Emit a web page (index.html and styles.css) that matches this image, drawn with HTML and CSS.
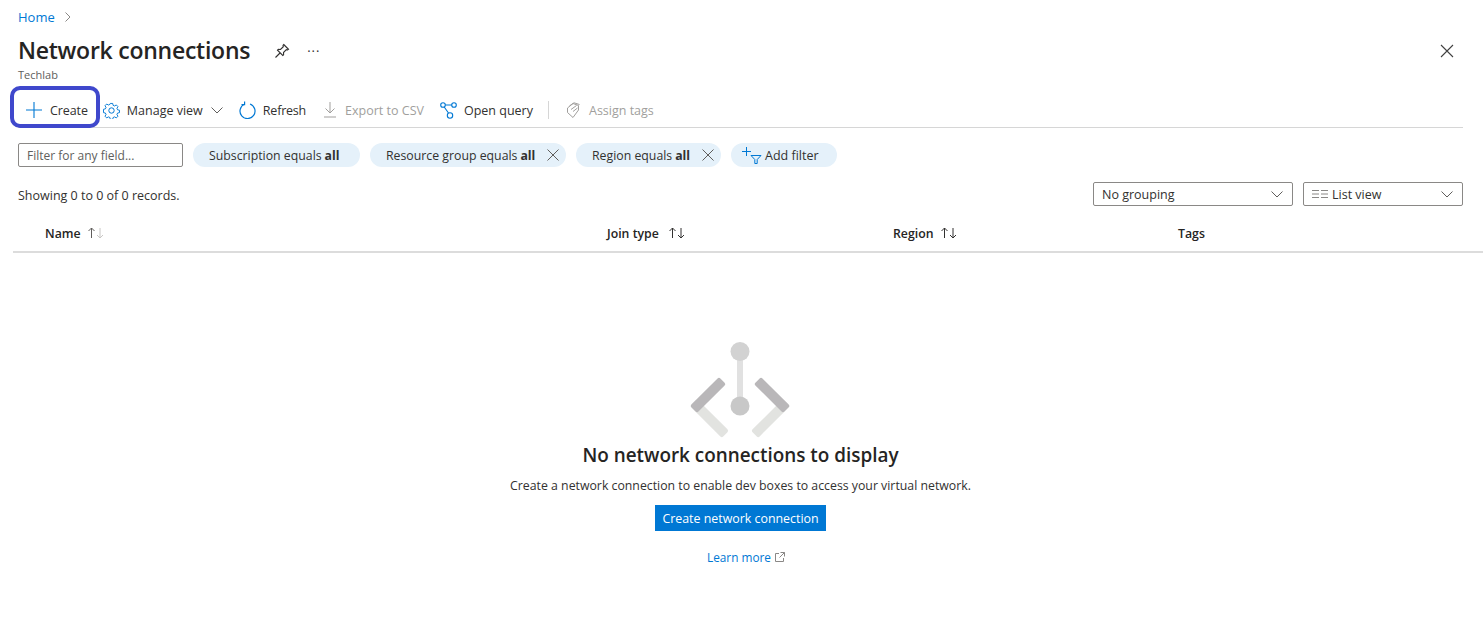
FILE: index.html
```html
<!DOCTYPE html>
<html lang="en">
<head>
<meta charset="utf-8">
<title>Network connections</title>
<link rel="stylesheet" href="styles.css">
</head>
<body>
<div class="page">
  <nav class="crumbs"><a class="link" href="#">Home</a>
    <svg class="crumb-chev" width="8" height="12" viewBox="0 0 8 12"><path d="M1.5 1.500 6 6l-4.500 4.500" fill="none" stroke="#8a8886"/></svg>
  </nav>
  <header class="title-row">
    <h1 class="title">Network connections</h1>
    <svg class="pin" width="16" height="16" viewBox="0 0 16 16"><path d="M9.700 1.500 14.500 6.300 13.600 7 12.300 6.700 9.500 9.500 9.600 11.800 8.800 12.500 3.500 7.200 4.300 6.400 6.500 6.500 9.300 3.700 9 2.300ZM6 10 1.500 14.500" fill="none" stroke="#323130" stroke-width="1.100"/></svg>
    <span class="more">···</span>
    <svg class="close" width="14" height="14" viewBox="0 0 14 14"><path d="M1 1l12 12M13 1 1 13" stroke="#404040" stroke-width="1.100" fill="none"/></svg>
  </header>
  <div class="subtitle">Techlab</div>

  <div class="toolbar">
    <button class="tool tool-create">
      <svg width="16" height="16" viewBox="0 0 16 16"><path d="M8 0v16M0 8h16" stroke="#0078d4" stroke-width="1.100" fill="none"/></svg>
      Create
    </button>
    <button class="tool tool-manage">
      <svg width="17" height="17" viewBox="0 0 17 17"><circle cx="8.500" cy="8.500" r="2.700" fill="none" stroke="#0078d4"/><path d="M7.200 1h2.600l.4 2 1.600.7 1.800-1.100 1.800 1.800-1.100 1.800.7 1.600 2 .4v2.600l-2 .4-.7 1.600 1.100 1.800-1.800 1.800-1.800-1.100-1.600.7-.4 2H7.200l-.4-2-1.600-.7-1.800 1.100-1.800-1.800 1.100-1.800-.7-1.600-2-.4V7.200l2-.4.700-1.600-1.100-1.800 1.800-1.800 1.800 1.100 1.600-.7Z" transform="translate(.5 .5) scale(.94)" fill="none" stroke="#0078d4"/></svg>
      Manage view
      <svg class="tool-chev" width="12" height="8" viewBox="0 0 12 8"><path d="M.5 1.500 6 7l5.500-5.500" fill="none" stroke="#605e5c"/></svg>
    </button>
    <button class="tool tool-refresh">
      <svg width="17" height="18" viewBox="0 0 17 18"><path d="M5.500 3.200A7.500 7.500 0 1 0 11 3M5.600 .5v3.200H2.500" fill="none" stroke="#0078d4" stroke-width="1.200"/></svg>
      Refresh
    </button>
    <button class="tool tool-export is-disabled">
      <svg width="14" height="16" viewBox="0 0 14 16"><path d="M7 0v11M2.500 6.500 7 11l4.500-4.500M1 15h12" fill="none" stroke="#a19f9d"/></svg>
      Export to CSV
    </button>
    <button class="tool tool-query">
      <svg width="17" height="17" viewBox="0 0 17 17"><circle cx="3" cy="3" r="2.300" fill="none" stroke="#0078d4" stroke-width="1.100"/><circle cx="14" cy="3" r="2.300" fill="none" stroke="#0078d4" stroke-width="1.100"/><circle cx="10" cy="13.500" r="2.700" fill="none" stroke="#0078d4" stroke-width="1.100"/><path d="M5.300 3h6.400M4.200 5 8.500 11" fill="none" stroke="#0078d4" stroke-width="1.100"/></svg>
      Open query
    </button>
    <span class="tool-sep"></span>
    <button class="tool tool-tags is-disabled">
      <svg width="15" height="17" viewBox="0 0 15 17"><path d="M1.500 6 7 1.500 12.500 3.500V8L7 15.500 1.500 10.500ZM3.500 3.800 8 .8 13.500 2.500M5 7.500 10.500 3.500M7 9.500 11.500 6" fill="none" stroke="#a19f9d"/></svg>
      Assign tags
    </button>
  </div>

  <div class="filters">
    <input class="filter-input" type="text" placeholder="Filter for any field...">
    <span class="pill pill-sub">Subscription equals <b>all</b></span>
    <span class="pill pill-x">Resource group equals <b>all</b>
      <svg width="12" height="12" viewBox="0 0 12 12"><path d="M.5.500l11 11M11.500.5l-11 11" stroke="#605e5c" fill="none"/></svg>
    </span>
    <span class="pill pill-x pill-region">Region equals <b>all</b>
      <svg width="12" height="12" viewBox="0 0 12 12"><path d="M.5.500l11 11M11.500.5l-11 11" stroke="#605e5c" fill="none"/></svg>
    </span>
    <span class="pill pill-add">
      <svg width="20" height="17" viewBox="0 0 20 17"><path d="M4.500 0v9M0 4.500h9" fill="none" stroke="#0078d4"/><path d="M9 8.500h10l-3.800 4v4h-2.400v-4Z" fill="none" stroke="#0078d4"/></svg>
      Add filter
    </span>
  </div>

  <div class="records-row">
    <span class="records">Showing 0 to 0 of 0 records.</span>
    <div class="select select-group">No grouping
      <svg width="12" height="7" viewBox="0 0 12 7"><path d="M.5.500 6 6l5.500-5.500" fill="none" stroke="#605e5c"/></svg>
    </div>
    <div class="select select-view">
      <span class="select-label"><svg width="16" height="8" viewBox="0 0 16 8"><path d="M0 .5h7M9 .5h7M0 4h7M9 4h7M0 7.500h7M9 7.500h7" stroke="#8a8886" fill="none"/></svg>List view</span>
      <svg width="12" height="7" viewBox="0 0 12 7"><path d="M.5.500 6 6l5.500-5.500" fill="none" stroke="#605e5c"/></svg>
    </div>
  </div>
</div>

<div class="table-head">
  <div class="col col-name">Name
    <svg class="sort" width="18" height="12" viewBox="0 0 18 12"><path d="M4.500 11V1M1.500 4l3-3 3 3" fill="none" stroke="#605e5c"/><path d="M13 1v10M10 8l3 3 3-3" fill="none" stroke="#c8c6c4"/></svg>
  </div>
  <div class="col col-join">Join type
    <svg class="sort" width="18" height="12" viewBox="0 0 18 12"><path d="M4.500 11V1M1.500 4l3-3 3 3M13 1v10M10 8l3 3 3-3" fill="none" stroke="#323130"/></svg>
  </div>
  <div class="col">Region
    <svg class="sort" width="18" height="12" viewBox="0 0 18 12"><path d="M4.500 11V1M1.500 4l3-3 3 3M13 1v10M10 8l3 3 3-3" fill="none" stroke="#323130"/></svg>
  </div>
  <div class="col">Tags</div>
</div>

<main class="empty">
  <svg class="empty-art" width="104" height="97" viewBox="0 0 104 97">
    <rect x="49" y="10" width="6" height="55" fill="#e1e1e1"/>
    <circle cx="52" cy="10.500" r="9.500" fill="#d2d2d2"/>
    <circle cx="52" cy="65" r="9.500" fill="#c8c8c8"/>
    <rect x="-.5" y="71" width="45" height="10" rx="2" fill="#e2e3e0" transform="rotate(45 20 76)"/>
    <rect x="59.500" y="71" width="45" height="10" rx="2" fill="#e2e3e0" transform="rotate(-45 84 76)"/>
    <rect x="-.5" y="49" width="41" height="10" rx="2" fill="#b9b7b9" transform="rotate(-45 20 54)"/>
    <rect x="63.500" y="49" width="41" height="10" rx="2" fill="#b9b7b9" transform="rotate(45 84 54)"/>
  </svg>
  <h2 class="empty-title">No network connections to display</h2>
  <p class="empty-desc">Create a network connection to enable dev boxes to access your virtual network.</p>
  <button class="primary">Create network connection</button>
  <a class="link learn" href="#">Learn more
    <svg width="10" height="10" viewBox="0 0 10 10"><path d="M4 1.500H.5v8h8V6M5.500.5h4v4M9.500.5 4.500 5.500" fill="none" stroke="#8a8886"/></svg>
  </a>
</main>

<div class="create-ring"></div>
</body>
</html>
```
FILE: styles.css
```css
* { box-sizing: border-box; }
html, body { margin: 0; padding: 0; }
body {
  font-family: "Open Sans", "Noto Sans", "Liberation Sans", sans-serif;
  font-size: 12px;
  color: #323130;
  background: #fff;
  height: 639px;
  overflow: hidden;
  position: relative;
}
.page { padding: 7px 20px 0 18px; }
.link { color: #0078d4; text-decoration: none; }

.crumbs { display: flex; align-items: center; height: 19px; font-size: 13px; gap: 9px; }
.title-row { display: flex; align-items: center; height: 34px; margin-top: 8px; }
.title { margin: 0 0 2px; font-size: 23px; font-weight: 600; color: #252423; letter-spacing: -.25px; white-space: nowrap; }
.pin { margin-left: 24px; }
.more { margin-left: 17px; font-size: 13px; color: #323130; letter-spacing: 1px; line-height: 14px; }
.close { margin-left: auto; margin-right: 9px; }
.subtitle { font-size: 11px; color: #605e5c; height: 16px; line-height: 14px; }

.toolbar { display: flex; align-items: center; height: 36px; margin-top: 8px; border-bottom: 1px solid #d6d6d6; padding-top: 1px; }
.tool { display: flex; align-items: center; background: none; border: 0; padding: 0; font: inherit; font-size: 12.5px; color: #323130; white-space: nowrap; gap: 8px; }
.tool.is-disabled { color: #a19f9d; }
.tool-create { margin-left: 8px; gap: 8px; letter-spacing: -.1px; }
.tool-manage { margin-left: 15px; gap: 7px; }
.tool-chev { margin-left: 1px; }
.tool-refresh { margin-left: 16px; gap: 7px; letter-spacing: -.2px; }
.tool-export { margin-left: 17px; gap: 8px; }
.tool-query { margin-left: 16px; gap: 7px; }
.tool-sep { width: 1px; height: 18px; background: #d6d6d6; margin-left: 15px; }
.tool-tags { margin-left: 17px; }

.filters { display: flex; align-items: center; margin-top: 15px; height: 24px; }
.filter-input { width: 165px; height: 24px; border: 1px solid #8a8886; border-radius: 2px; padding: 0 8px; font: inherit; font-size: 12px; }
.filter-input::placeholder { color: #605e5c; opacity: 1; }
.pill { display: flex; align-items: center; height: 24px; border-radius: 12px; background: #e5f1fa; font-size: 12.3px; white-space: nowrap; }
.pill b { font-weight: 700; margin-left: 3px; }
.pill-sub { margin-left: 10px; width: 167px; padding-left: 16px; }
.pill-x { margin-left: 10px; width: 196px; padding-left: 16px; }
.pill-x svg { margin-left: auto; margin-right: 7px; }
.pill-region { width: 145px; }
.pill-add { margin-left: 10px; width: 106px; padding-left: 11px; gap: 3px; font-size: 12.5px; }

.records-row { display: flex; align-items: center; margin-top: 15px; height: 24px; }
.records { font-size: 12.5px; margin-right: auto; margin-top: 2px; }
.select { display: flex; align-items: center; justify-content: space-between; height: 24px; border: 1px solid #8a8886; border-radius: 2px; padding: 0 9px 0 8px; font-size: 12.5px; }
.select-group { width: 200px; }
.select-view { width: 160px; margin-left: 10px; }
.select-label { display: flex; align-items: center; gap: 4px; }

.table-head { display: grid; grid-template-columns: 561px 287px 285px 1fr; height: 34px; margin: 13px 0 0 13px; padding: 0 0 4px 32px; border-bottom: 2px solid #dcdcdc; align-items: center; font-size: 12.3px; font-weight: 600; color: #252423; }
.col { display: flex; align-items: center; gap: 6px; }
.col-join { gap: 9px; padding-left: 1px; }
.col-name { gap: 6px; }

.empty { display: flex; flex-direction: column; align-items: center; margin-top: 88px; padding-right: 2px; }
.empty-art { display: block; margin-left: -1px; }
.empty-title { margin: 3px 0 0; font-size: 18.9px; line-height: 28px; font-weight: 600; color: #252423; white-space: nowrap; }
.empty-desc { margin: 8px 0 0; font-size: 12.3px; line-height: 18px; white-space: nowrap; }
.primary { margin-top: 10px; width: 171px; height: 26px; border: 0; background: #0078d4; color: #fff; font: inherit; font-size: 12.4px; padding: 0; white-space: nowrap; }
.learn { margin-top: 18px; font-size: 11.8px; display: flex; align-items: center; gap: 4px; margin-left: 11px; }

.create-ring { position: absolute; left: 10px; top: 86px; width: 90px; height: 42px; border: 4px solid #3f48cc; border-radius: 10px; }
```
